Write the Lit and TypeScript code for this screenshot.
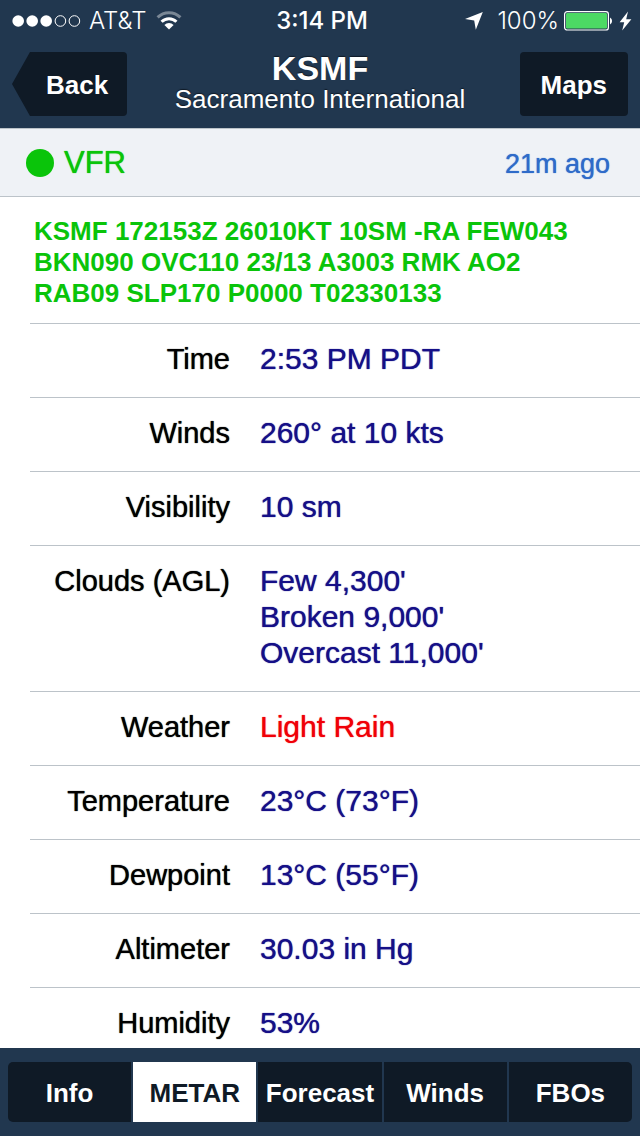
import { LitElement, html, css } from "lit";
import { customElement, property, state } from "lit/decorators.js";
import { classMap } from "lit/directives/class-map.js";

interface Reading {
  label: string;
  values: string[];
  alert?: boolean;
}

const READINGS: Reading[] = [
  { label: "Time", values: ["2:53 PM PDT"] },
  { label: "Winds", values: ["260° at 10 kts"] },
  { label: "Visibility", values: ["10 sm"] },
  { label: "Clouds (AGL)", values: ["Few 4,300'", "Broken 9,000'", "Overcast 11,000'"] },
  { label: "Weather", values: ["Light Rain"], alert: true },
  { label: "Temperature", values: ["23°C (73°F)"] },
  { label: "Dewpoint", values: ["13°C (55°F)"] },
  { label: "Altimeter", values: ["30.03 in Hg"] },
  { label: "Humidity", values: ["53%"] },
];

const TABS = ["Info", "METAR", "Forecast", "Winds", "FBOs"];

@customElement("status-bar")
export class StatusBar extends LitElement {
  static styles = css`
    :host {
      display: grid;
      grid-template-columns: 1fr auto 1fr;
      align-items: center;
      box-sizing: border-box;
      height: 40px;
      padding: 2px 8px 0 12px;
      color: #fff;
      font: 300 24px/38px Inter, "Open Sans", sans-serif;
    }
    .side {
      display: flex;
      align-items: center;
    }
    .left {
      gap: 8px;
    }
    .wifi {
      margin-left: 2px;
    }
    .right {
      justify-content: flex-end;
      gap: 5px;
    }
    .arrow {
      margin-right: 8px;
    }
    .time {
      font-weight: 500;
    }
    svg {
      display: block;
      flex: none;
    }
  `;

  render() {
    return html`
      <div class="side left">
        <svg width="69" height="14" viewBox="0 0 69 14" aria-label="Signal">
          <g fill="#fff">
            <circle cx="6.2" cy="7" r="5.8" />
            <circle cx="20.2" cy="7" r="5.8" />
            <circle cx="34.2" cy="7" r="5.8" />
          </g>
          <g fill="none" stroke="#fff">
            <circle cx="48.4" cy="7" r="5.3" />
            <circle cx="62.4" cy="7" r="5.3" />
          </g>
        </svg>
        <span>AT&amp;T</span>
        <svg class="wifi" width="26" height="20" viewBox="0 0 26 20" aria-label="Wi-Fi">
          <g fill="none" stroke="#fff" stroke-width="3">
            <path d="M1.6 6.4A16 16 0 0 1 24.4 6.4" opacity=".4" />
            <path d="M5.6 10.8A10.4 10.4 0 0 1 20.4 10.8" />
          </g>
          <path d="M8.4 14a6.4 6.4 0 0 1 9.2 0L13 18.6z" fill="#fff" />
        </svg>
      </div>
      <span class="time">3:14 PM</span>
      <div class="side right">
        <svg class="arrow" width="20" height="20" viewBox="0 0 20 20" aria-label="Location">
          <path d="M18.8 1 11.8 18.8 10.2 9.4 1 8z" fill="#fff" />
        </svg>
        <span>100%</span>
        <svg width="50" height="20" viewBox="0 0 50 20" aria-label="Battery">
          <rect x=".6" y=".6" width="43.8" height="18.4" rx="2.6" fill="none" stroke="#fff" stroke-width="1.2" />
          <rect x="2" y="2" width="41" height="15.6" rx="1.4" fill="#4cd964" />
          <path d="M46 6.4a4 4 0 0 1 0 7z" fill="#fff" />
        </svg>
        <svg width="13" height="20" viewBox="0 0 13 20" aria-label="Charging">
          <path d="M9 .5.6 11.3h4.6L3.2 19.5 12.4 8.2H7.2z" fill="#fff" />
        </svg>
      </div>
    `;
  }
}

@customElement("nav-header")
export class NavHeader extends LitElement {
  static styles = css`
    :host {
      display: grid;
      grid-template-columns: 1fr auto 1fr;
      align-items: start;
      padding: 12px 12px;
      color: #fff;
    }
    button {
      height: 64px;
      border: 0;
      padding: 2px 21px 0;
      background: #0f1a26;
      color: #fff;
      font: bold 26px/32px "Liberation Sans", Arial, sans-serif;
    }
    .back {
      justify-self: start;
      padding: 2px 19px 0 34px;
      border-radius: 4px;
      clip-path: polygon(0 50%, 18px 0, 100% 0, 100% 100%, 18px 100%);
    }
    .maps {
      justify-self: end;
      border-radius: 4px;
    }
    .title {
      text-align: center;
      text-shadow: 0 -1px 1px #0f1a26;
    }
    h1 {
      margin: 0;
      font-size: 34px;
      line-height: 32px;
    }
    p {
      margin: 0;
      font-size: 26px;
      line-height: 30px;
    }
  `;

  render() {
    return html`
      <button class="back" type="button">Back</button>
      <div class="title">
        <h1>KSMF</h1>
        <p>Sacramento International</p>
      </div>
      <button class="maps" type="button">Maps</button>
    `;
  }
}

@customElement("reading-list")
export class ReadingList extends LitElement {
  @property({ attribute: false }) readings: Reading[] = [];

  static styles = css`
    :host {
      display: block;
      padding-left: 30px;
    }
    table {
      width: 100%;
      border-collapse: separate;
      border-spacing: 0;
    }
    th,
    td {
      border-top: 1px solid #bcc3c9;
      padding: 17px 0 20px;
      line-height: 36px;
      vertical-align: top;
      font-weight: normal;
      text-shadow: 0 0 1px currentColor;
    }
    th {
      width: 200px;
      text-align: right;
      font-size: 29px;
      color: #000;
    }
    td {
      padding-left: 30px;
      font-size: 30px;
      color: #150f87;
    }
    .alert {
      color: #f00008;
    }
  `;

  render() {
    return html`
      <table>
        <tbody>
          ${this.readings.map(
            (r) => html`<tr>
              <th scope="row">${r.label}</th>
              <td class=${classMap({ alert: !!r.alert })}>
                ${r.values.map((v) => html`<div>${v}</div>`)}
              </td>
            </tr>`
          )}
        </tbody>
      </table>
    `;
  }
}

@customElement("tab-strip")
export class TabStrip extends LitElement {
  @state() private current = "METAR";

  static styles = css`
    :host {
      display: block;
      padding: 14px 8px;
      background: #21374f;
    }
    nav {
      display: grid;
      grid-template-columns: repeat(5, 1fr);
      gap: 2px;
      border-radius: 5px;
      overflow: hidden;
    }
    button {
      height: 60px;
      min-width: 0;
      border: 0;
      padding: 2px 0 0;
      background: #0f1a26;
      color: #fff;
      font: bold 26px/32px "Liberation Sans", Arial, sans-serif;
    }
    .current {
      background: #fff;
      color: #0f1a26;
    }
  `;

  render() {
    return html`
      <nav>
        ${TABS.map(
          (t) => html`<button
            type="button"
            class=${classMap({ current: t === this.current })}
            @click=${() => (this.current = t)}
          >${t}</button>`
        )}
      </nav>
    `;
  }
}

@customElement("app-root")
export class AppRoot extends LitElement {
  static styles = css`
    :host {
      display: flex;
      flex-direction: column;
      height: 100vh;
      overflow: hidden;
      background: #fff;
      font-family: "Liberation Sans", Arial, sans-serif;
    }
    .top {
      background: #21374f;
    }
    .summary {
      display: flex;
      align-items: center;
      justify-content: space-between;
      padding: 0 30px 0 26px;
      border: 1px solid #bcc3c9;
      border-width: 1px 0;
      background: #eff2f6;
      line-height: 67px;
    }
    .rules,
    .age {
      text-shadow: 0 0 1px currentColor;
    }
    .rules {
      display: flex;
      align-items: center;
      gap: 10px;
      color: #0ac40a;
      font-size: 31px;
    }
    .dot {
      width: 28px;
      height: 28px;
      border-radius: 50%;
      background: #0ac40a;
    }
    .age {
      padding-top: 3px;
      line-height: 64px;
      color: #2f6bc9;
      font-size: 27px;
    }
    .scroll {
      flex: 1;
      min-height: 0;
      overflow-y: auto;
      scrollbar-width: none;
    }
    .raw {
      margin: 0;
      padding: 19px 34px 14px;
      color: #0ac40a;
      font-weight: bold;
      font-size: 26px;
      line-height: 31px;
    }
  `;

  render() {
    return html`
      <header class="top">
        <status-bar></status-bar>
        <nav-header></nav-header>
      </header>
      <section class="summary">
        <div class="rules"><span class="dot"></span>VFR</div>
        <span class="age">21m ago</span>
      </section>
      <main class="scroll">
        <p class="raw">
          KSMF 172153Z 26010KT 10SM -RA FEW043 BKN090 OVC110 23/13 A3003 RMK AO2 RAB09 SLP170 P0000
          T02330133
        </p>
        <reading-list .readings=${READINGS}></reading-list>
      </main>
      <tab-strip></tab-strip>
    `;
  }
}
